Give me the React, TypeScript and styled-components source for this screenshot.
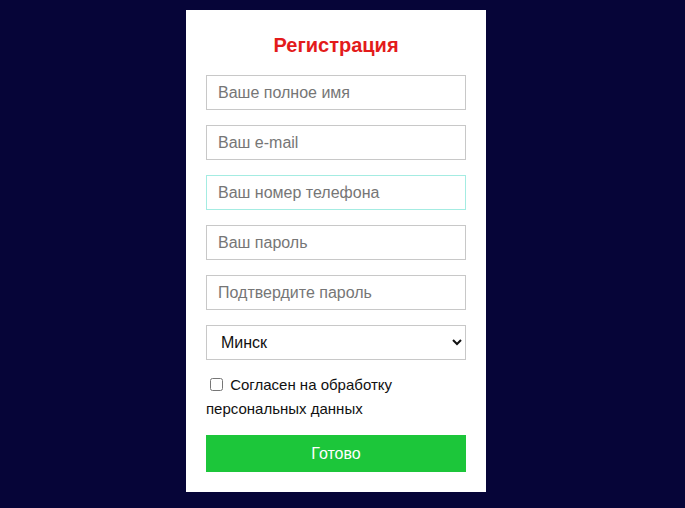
import React from "react";
import styled, { createGlobalStyle } from "styled-components";

const Global = createGlobalStyle`
  html, body {
    margin: 0;
    padding: 0;
    background: #060538;
    font-family: Arial, "Liberation Sans", sans-serif;
  }
  * { box-sizing: border-box; }
`;

const Page = styled.div`
  min-height: 508px;
  display: flex;
  justify-content: center;
  align-items: flex-start;
  padding: 10px 13px 0 0;
`;

const Card = styled.form`
  width: 300px;
  background: #ffffff;
  padding: 20px 20px 20px;
  display: flex;
  flex-direction: column;
`;

const Title = styled.h2`
  margin: 0 0 15px;
  height: 30px;
  line-height: 30px;
  text-align: center;
  font-size: 20px;
  font-weight: bold;
  color: #e31b1b;
  font-family: Arial, "Liberation Sans", sans-serif;
`;

const Field = styled.input<{ $focused?: boolean }>`
  display: block;
  width: 260px;
  height: 35px;
  margin: 0 0 15px;
  padding: 0 11px;
  border: 1px solid ${(p) => (p.$focused ? "#a4ece2" : "#c8c8c8")};
  outline: none;
  background: #fff;
  font-size: 16px;
  font-family: Arial, "Liberation Sans", sans-serif;
  color: #222;
  caret-color: #000;
  &::placeholder {
    color: #767676;
  }
`;

const Select = styled.select`
  display: block;
  width: 260px;
  height: 35px;
  margin: 0 0 13px;
  padding: 0 10px;
  border: 1px solid #c8c8c8;
  border-radius: 0;
  background: #fff;
  font-size: 16px;
  font-family: Arial, "Liberation Sans", sans-serif;
  color: #111;
  outline: none;
`;

const Agree = styled.label`
  display: block;
  font-size: 15px;
  line-height: 24px;
  color: #111;
  margin: 0 0 14px;
  font-family: Arial, "Liberation Sans", sans-serif;
`;

const Check = styled.input`
  width: 13px;
  height: 13px;
  margin: 0 3px 0 4px;
  vertical-align: -1px;
`;

const Submit = styled.button`
  width: 260px;
  height: 37px;
  border: none;
  background: #1cc63a;
  color: #fff;
  font-size: 16px;
  font-family: Arial, "Liberation Sans", sans-serif;
  cursor: pointer;
`;

export default function App() {
  return (
    <>
      <Global />
      <Page>
        <Card onSubmit={(e) => e.preventDefault()}>
          <Title>Регистрация</Title>
          <Field placeholder="Ваше полное имя" />
          <Field placeholder="Ваш e-mail" />
          <Field placeholder="Ваш номер телефона" $focused autoFocus />
          <Field placeholder="Ваш пароль" type="password" />
          <Field placeholder="Подтвердите пароль" type="password" />
          <Select defaultValue="Минск">
            <option>Минск</option>
            <option>Брест</option>
            <option>Гомель</option>
            <option>Гродно</option>
            <option>Витебск</option>
            <option>Могилёв</option>
          </Select>
          <Agree>
            <Check type="checkbox" /> Согласен на обработку персональных данных
          </Agree>
          <Submit type="submit">Готово</Submit>
        </Card>
      </Page>
    </>
  );
}
